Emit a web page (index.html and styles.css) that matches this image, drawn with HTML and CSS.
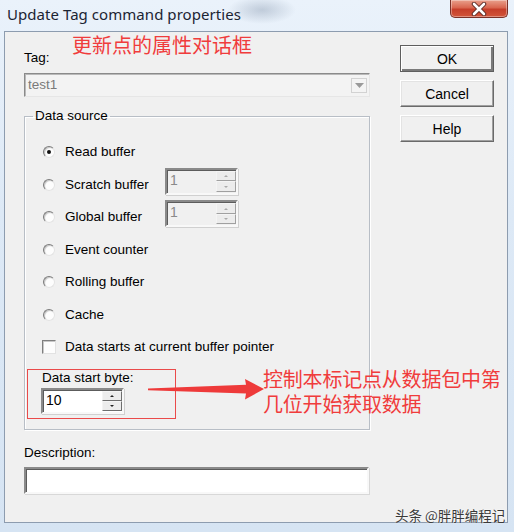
FILE: index.html
```html
<!DOCTYPE html>
<html>
<head>
<meta charset="utf-8">
<link rel="stylesheet" href="styles.css">
</head>
<body>
<div class="window">
  <div class="titlebar">
    <span class="title">Update Tag command properties</span>
    <span class="close"><svg width="20" height="14" viewBox="0 0 20 14"><path d="M5 2 L15 12 M15 2 L5 12" stroke="#5a2a24" stroke-width="4.5" stroke-linecap="round"/><path d="M5 2 L15 12 M15 2 L5 12" stroke="#ffffff" stroke-width="2.6" stroke-linecap="round"/></svg></span>
  </div>
  <div class="client">
    <div class="main">
      <div class="label tag-label">Tag:</div>
      <div class="combo">
        <span class="combo-text">test1</span>
        <span class="combo-btn"><svg width="9" height="5" viewBox="0 0 9 5"><path d="M0 0 H9 L4.5 5 Z" fill="#9a9a9a"/></svg></span>
      </div>
      <fieldset class="group">
        <legend>Data source</legend>
        <div class="rows">
          <div class="row"><span class="radio on"></span><span class="rlabel">Read buffer</span></div>
          <div class="row"><span class="radio"></span><span class="rlabel fixed">Scratch buffer</span>
            <div class="spin disabled"><span class="spin-val">1</span><span class="spin-btns"><span class="sb"><i class="up"></i></span><span class="sb"><i class="down"></i></span></span></div>
          </div>
          <div class="row"><span class="radio"></span><span class="rlabel fixed">Global buffer</span>
            <div class="spin disabled"><span class="spin-val">1</span><span class="spin-btns"><span class="sb"><i class="up"></i></span><span class="sb"><i class="down"></i></span></span></div>
          </div>
          <div class="row"><span class="radio"></span><span class="rlabel">Event counter</span></div>
          <div class="row"><span class="radio"></span><span class="rlabel">Rolling buffer</span></div>
          <div class="row"><span class="radio"></span><span class="rlabel">Cache</span></div>
          <div class="row"><span class="check"></span><span class="rlabel">Data starts at current buffer pointer</span></div>
        </div>
        <div class="label start-label">Data start byte:</div>
        <div class="spin start"><span class="spin-val">10</span><span class="spin-btns"><span class="sb"><i class="up"></i></span><span class="sb"><i class="down"></i></span></span></div>
      </fieldset>
      <div class="label desc-label">Description:</div>
      <div class="desc"></div>
    </div>
    <div class="side">
      <div class="btn default">OK</div>
      <div class="btn">Cancel</div>
      <div class="btn">Help</div>
    </div>
  </div>

  <div class="note note-top">更新点的属性对话框</div>
  <div class="redbox"></div>
  <svg class="arrow" width="130" height="30" viewBox="140 375 130 30"><polygon points="148,388.6 148,390.2 246,393.5 245,399.5 264,389 245,379 246,384.8" fill="#ee3a3a"/></svg>
  <div class="note note-side">控制本标记点从数据包中第<br>几位开始获取数据</div>
  <div class="watermark">头条 @胖胖编程记</div>
</div>
</body>
</html>
```

FILE: styles.css
```css
* { box-sizing: border-box; }
html, body { margin: 0; padding: 0; }
body {
  width: 514px;
  height: 532px;
  overflow: hidden;
  background: #dce8f5;
  font-family: "Liberation Sans", Arial, sans-serif;
}
.window {
  position: relative;
  width: 514px;
  height: 532px;
  background: linear-gradient(180deg, #eaf2fb 0%, #dde9f6 40%, #d6e4f3 100%);
}
.titlebar {
  height: 31px;
  display: flex;
  justify-content: space-between;
  align-items: flex-start;
  padding: 0 6px 0 7px;
  background: radial-gradient(ellipse 34px 14px at 262px 10px, rgba(150,165,185,0.5), rgba(150,165,185,0) 100%);
}
.title {
  font-family: "Noto Sans", "Open Sans", sans-serif;
  font-size: 15px;
  line-height: 18px;
  margin-top: 5px;
  color: #1c2433;
  letter-spacing: 0.05px;
}
.close {
  width: 58px;
  height: 18px;
  display: flex;
  align-items: center;
  justify-content: center;
  border: 1px solid #7a3128;
  border-top: none;
  border-radius: 0 0 5px 5px;
  background: linear-gradient(180deg, #e9a08c 0%, #d9664f 45%, #c63e2a 55%, #d2553a 100%);
  box-shadow: inset 0 0 0 1px rgba(255,255,255,0.35);
}
.client {
  margin: 0 6px 0 4px;
  height: 492px;
  border: 1px solid #8d9caf;
  background: #f0f0f0;
  display: flex;
  color: #000;
  font-size: 13.5px;
}
.main {
  width: 365px;
  padding-left: 19px;
}
.label {
  line-height: 16px;
  height: 16px;
  white-space: nowrap;
}
.tag-label { margin-top: 18px; }
.combo {
  margin-top: 7px;
  width: 346px;
  height: 24px;
  border: 1px solid;
  border-color: #8a8a8a #e6e6e6 #e6e6e6 #8a8a8a;
  box-shadow: inset 1px 1px 0 #b9b9b9;
  background: #f3f3f3;
  display: flex;
  align-items: center;
  justify-content: space-between;
  padding: 0 2px 0 3px;
}
.combo-text { color: #7a7a7a; line-height: 16px; }
.combo-btn {
  width: 16px;
  height: 15px;
  border: 1px solid #d2d2d2;
  background: #f4f4f4;
  display: flex;
  align-items: center;
  justify-content: center;
}
.group {
  margin: 11px 0 0 0;
  width: 346px;
  border: 1px solid #b8bec6;
  box-shadow: 1px 1px 0 #ffffff, inset 1px 1px 0 #ffffff;
  padding: 12px 0 15px 8px;
  min-inline-size: 0;
}
.group legend {
  padding: 0 2px;
  line-height: 16px;
  height: 16px;
}
.rows { margin-left: 10px; }
.row {
  height: 32.5px;
  display: flex;
  align-items: center;
}
.radio {
  width: 12px;
  height: 12px;
  border-radius: 50%;
  border: 1px solid;
  border-color: #7b7b7b #e4e4e4 #e4e4e4 #7b7b7b;
  background: #fdfdfd;
  box-shadow: inset 1px 1px 1px #c4c4c4;
  position: relative;
  flex: none;
}
.radio.on::after {
  content: "";
  position: absolute;
  left: 3px;
  top: 3px;
  width: 4px;
  height: 4px;
  border-radius: 50%;
  background: #111;
}
.check {
  width: 14px;
  height: 14px;
  border: 1px solid;
  border-color: #7f7f7f #e2e2e2 #e2e2e2 #7f7f7f;
  box-shadow: inset 1px 1px 0 #c8c8c8;
  background: #fdfdfd;
  margin-left: -1px;
  margin-right: -1px;
  flex: none;
}
.rlabel {
  margin-left: 10px;
  line-height: 16px;
  white-space: nowrap;
}
.rlabel.fixed { width: 100px; }
.spin {
  display: flex;
  width: 73px;
  height: 27px;
  border: 2px solid;
  border-color: #8a8a8a #f8f8f8 #f8f8f8 #8a8a8a;
  box-shadow: inset 1px 1px 0 #5c5c5c, 1px 1px 0 #d0d0d0;
  background: #ffffff;
  margin-bottom: 7px;
}
.spin.disabled { background: #f0f0f0; }
.spin-val {
  flex: 1;
  padding-left: 3px;
  line-height: 20px;
  font-size: 14px;
}
.spin.disabled .spin-val { color: #8a8a8a; }
.spin-btns {
  width: 20px;
  display: flex;
  flex-direction: column;
  padding: 1px 0;
}
.sb {
  flex: 1;
  border: 1px solid;
  border-color: #f4f4f4 #6e6e6e #6e6e6e #f4f4f4;
  background: #ececec;
  display: flex;
  align-items: center;
  justify-content: center;
}
.spin.disabled .sb { border-color: #f4f4f4 #a0a0a0 #a0a0a0 #f4f4f4; }
.sb i {
  width: 0;
  height: 0;
  border-left: 2px solid transparent;
  border-right: 2px solid transparent;
}
.sb i.up { border-bottom: 2px solid #222; }
.sb i.down { border-top: 2px solid #222; }
.spin.disabled .sb i.up { border-bottom-color: #aaa; }
.spin.disabled .sb i.down { border-top-color: #aaa; }
.start-label { margin-top: 6px; margin-left: 9px; }
.spin.start {
  margin: 2px 0 0 8px;
  width: 83px;
  height: 26px;
}
.desc-label { margin-top: 15px; }
.desc {
  margin-top: 6px;
  width: 345px;
  height: 27px;
  border: 2px solid;
  border-color: #8a8a8a #f8f8f8 #f8f8f8 #8a8a8a;
  box-shadow: inset 1px 1px 0 #5c5c5c, 1px 1px 0 #d8d8d8;
  background: #fff;
}
.side {
  margin-left: 30px;
  padding-top: 13px;
  display: flex;
  flex-direction: column;
  gap: 8px;
}
.btn {
  width: 94px;
  height: 27px;
  border: 1px solid;
  border-color: #ffffff #6a6a6a #6a6a6a #ffffff;
  box-shadow: inset -1px -1px 0 #a0a0a0, inset 1px 1px 0 #e3e3e3;
  background: #f0f0f0;
  display: flex;
  align-items: center;
  justify-content: center;
  font-size: 14px;
  line-height: 16px;
}
.btn.default {
  border: 1px solid #5e5e5e;
  box-shadow: inset 1px 1px 0 #ffffff, inset -2px -2px 0 #7a7a7a;
}
.note {
  position: absolute;
  color: #f03c3c;
  font-family: "Noto Sans CJK SC", sans-serif;
  font-size: 20px;
  line-height: 25px;
  white-space: nowrap;
}
.note-top { left: 72px; top: 32px; }
.note-side { left: 263px; top: 366px; letter-spacing: -0.2px; }
.redbox {
  position: absolute;
  left: 27px;
  top: 369px;
  width: 149px;
  height: 50px;
  border: 1.5px solid #ea4a4a;
}
.arrow {
  position: absolute;
  left: 140px;
  top: 375px;
}
.watermark {
  position: absolute;
  left: 395px;
  top: 506px;
  font-family: "Noto Sans CJK SC", sans-serif;
  font-size: 13.5px;
  line-height: 18px;
  color: #3a3a3a;
  text-shadow: 0 0 2px #ffffff;
  white-space: nowrap;
}
```
